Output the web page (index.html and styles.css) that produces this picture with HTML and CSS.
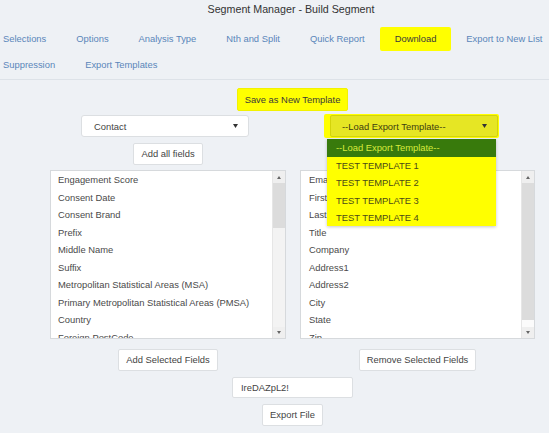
FILE: index.html
```html
<!DOCTYPE html>
<html>
<head>
<meta charset="utf-8">
<title>Segment Manager - Build Segment</title>
<link rel="stylesheet" href="styles.css">
</head>
<body>
<div class="page">
  <h1 class="title">Segment Manager - Build Segment</h1>
  <nav class="nav">
    <a class="nav-link">Selections</a>
    <a class="nav-link">Options</a>
    <a class="nav-link">Analysis Type</a>
    <a class="nav-link">Nth and Split</a>
    <a class="nav-link">Quick Report</a>
    <a class="nav-link active">Download</a>
    <a class="nav-link">Export to New List</a>
    <a class="nav-link">Suppression</a>
    <a class="nav-link">Export Templates</a>
  </nav>
  <main class="main">
    <div class="center-row"><button class="btn btn-yellow">Save as New Template</button></div>
    <div class="cols">
      <div class="cell">
        <div class="select select-contact"><span>Contact</span><svg class="caret" width="5" height="4" viewBox="0 0 5 4"><path d="M0 0H5L2.5 4Z" fill="#333"/></svg></div>
      </div>
      <div class="cell template-cell">
        <div class="yellow-wrap">
          <div class="select select-yellow"><span>--Load Export Template--</span><svg class="caret" width="5" height="4" viewBox="0 0 5 4"><path d="M0 0H5L2.5 4Z" fill="#333"/></svg></div>
        </div>
        <ul class="dropdown">
          <li class="dd-item dd-selected">--Load Export Template--</li>
          <li class="dd-item">TEST TEMPLATE 1</li>
          <li class="dd-item">TEST TEMPLATE 2</li>
          <li class="dd-item">TEST TEMPLATE 3</li>
          <li class="dd-item">TEST TEMPLATE 4</li>
        </ul>
      </div>
      <div class="cell cell-center"><button class="btn">Add all fields</button></div>
      <div class="cell"></div>
      <div class="listbox">
        <ul class="items">
          <li>Engagement Score</li>
          <li>Consent Date</li>
          <li>Consent Brand</li>
          <li>Prefix</li>
          <li>Middle Name</li>
          <li>Suffix</li>
          <li>Metropolitan Statistical Areas (MSA)</li>
          <li>Primary Metropolitan Statistical Areas (PMSA)</li>
          <li>Country</li>
          <li>Foreign PostCode</li>
        </ul>
        <div class="scrollbar">
          <div class="sb-btn sb-up"><svg width="4" height="3" viewBox="0 0 4 3"><path d="M0 3H4L2 0Z" fill="#666"/></svg></div>
          <div class="sb-thumb thumb-left"></div>
          <div class="sb-track"></div>
          <div class="sb-btn sb-down"><svg width="4" height="3" viewBox="0 0 4 3"><path d="M0 0H4L2 3Z" fill="#666"/></svg></div>
        </div>
      </div>
      <div class="listbox">
        <ul class="items items-right">
          <li>Email</li>
          <li>First Name</li>
          <li>Last Name</li>
          <li>Title</li>
          <li>Company</li>
          <li>Address1</li>
          <li>Address2</li>
          <li>City</li>
          <li>State</li>
          <li>Zip</li>
        </ul>
        <div class="scrollbar">
          <div class="sb-btn sb-up"><svg width="4" height="3" viewBox="0 0 4 3"><path d="M0 3H4L2 0Z" fill="#666"/></svg></div>
          <div class="sb-thumb thumb-right"></div>
          <div class="sb-track sb-track-white"></div>
          <div class="sb-btn sb-down"><svg width="4" height="3" viewBox="0 0 4 3"><path d="M0 0H4L2 3Z" fill="#666"/></svg></div>
        </div>
      </div>
      <div class="cell cell-center cell-actions"><button class="btn">Add Selected Fields</button></div>
      <div class="cell cell-center cell-actions"><button class="btn">Remove Selected Fields</button></div>
    </div>
    <div class="center-row row-input"><input class="text-input" type="text" value="IreDAZpL2!"></div>
    <div class="center-row row-export"><button class="btn">Export File</button></div>
  </main>
</div>
</body>
</html>
```

FILE: styles.css
```css
html, body {
  margin: 0;
  padding: 0;
}
body {
  background: #eef1f5;
  font-family: "Liberation Sans", Arial, sans-serif;
  font-size: 9.4px;
  color: #444;
  overflow: hidden;
}
.page {
  width: 582px;
}
.title {
  margin: 0;
  padding: 2px 0 10px;
  font-size: 10.7px;
  font-weight: normal;
  line-height: 15px;
  text-align: center;
  color: #333;
}
.nav {
  display: flex;
  flex-wrap: wrap;
  row-gap: 2px;
  margin-left: -12px;
  padding-bottom: 2px;
  border-bottom: 1px solid #dde2e8;
}
.nav-link {
  display: block;
  padding: 0 15px;
  line-height: 24px;
  height: 24px;
  color: #5a86ba;
  white-space: nowrap;
}
.nav-link.active {
  background: #ffff00;
  color: #3a3a3a;
  border-radius: 2px;
}
.main {
  width: 485px;
  margin-left: 50px;
  padding-top: 8px;
}
.center-row {
  display: flex;
  justify-content: center;
}
.btn {
  box-sizing: border-box;
  height: 22px;
  padding: 0 7px;
  margin: 0;
  font-family: "Liberation Sans", Arial, sans-serif;
  font-size: 9.4px;
  color: #444;
  background: #fff;
  border: 1px solid #dcdfe2;
  border-radius: 2px;
  line-height: 20px;
}
.btn-yellow {
  height: 23px;
  background: #ffff00;
  border-color: #f2f200;
  color: #3a3a3a;
}
.cols {
  display: grid;
  grid-template-columns: 236px 235px;
  column-gap: 14px;
  row-gap: 5px;
  margin-top: 4px;
}
.cell-center {
  display: flex;
  justify-content: center;
}
.cell-actions {
  margin-top: 5px;
}
.select {
  box-sizing: border-box;
  width: 168px;
  height: 22px;
  display: flex;
  align-items: center;
  justify-content: space-between;
  padding: 0 10px 0 12px;
  background: #fff;
  border: 1px solid #dcdfe2;
  border-radius: 3px;
  color: #444;
}
.select-contact {
  margin-left: 31px;
}
.template-cell {
  position: relative;
}
.yellow-wrap {
  display: inline-block;
  margin-left: 24px;
  margin-top: -1px;
  padding: 1px 1px 1px 6px;
  background: #ffff00;
  border-radius: 2px;
}
.select-yellow {
  padding-left: 11px;
  background: #e6e624;
  border-color: #d4d40a;
  color: #3d3d10;
  border-radius: 2px;
}
.dropdown {
  position: absolute;
  left: 27px;
  top: 24px;
  width: 169px;
  margin: 0;
  padding: 0;
  list-style: none;
  background: #ffff00;
  box-shadow: 0 1px 3px rgba(0, 0, 0, 0.22);
  z-index: 5;
}
.dd-item {
  padding-left: 9px;
  line-height: 17.3px;
  height: 17.3px;
  color: #4a4a18;
  white-space: nowrap;
}
.dd-item.dd-selected {
  height: 18px;
  line-height: 18px;
  background: #387a0c;
  color: #d7ea3c;
}
.listbox {
  box-sizing: border-box;
  height: 169px;
  display: flex;
  background: #fff;
  border: 1px solid #d6d9dc;
}
.items {
  flex: 1;
  margin: 0;
  padding: 0 0 0 7px;
  list-style: none;
  overflow: hidden;
  color: #4a4a4a;
}
.items-right {
  padding-left: 8px;
}
.items li {
  line-height: 17.55px;
  height: 17.55px;
  white-space: nowrap;
}
.scrollbar {
  width: 12px;
  display: flex;
  flex-direction: column;
  background: #f1f1f1;
  border-left: 1px solid #e6e6e6;
}
.sb-btn {
  display: flex;
  align-items: center;
  justify-content: center;
  background: #efefef;
}
.sb-up {
  height: 12px;
}
.sb-down {
  height: 11px;
}
.sb-thumb {
  background: #dcdcdc;
}
.thumb-left {
  height: 45px;
}
.thumb-right {
  height: 137px;
}
.sb-track {
  flex: 1;
  background: #f3f3f3;
}
.sb-track-white {
  background: #fbfbfb;
}
.row-input {
  margin-top: 6px;
}
.text-input {
  box-sizing: border-box;
  width: 121px;
  height: 21px;
  margin: 0;
  padding: 0 8px;
  font-family: "Liberation Sans", Arial, sans-serif;
  font-size: 9.4px;
  color: #444;
  background: #fff;
  border: 1px solid #dcdfe2;
  border-radius: 2px;
  outline: none;
}
.row-export {
  margin-top: 6px;
}
```
